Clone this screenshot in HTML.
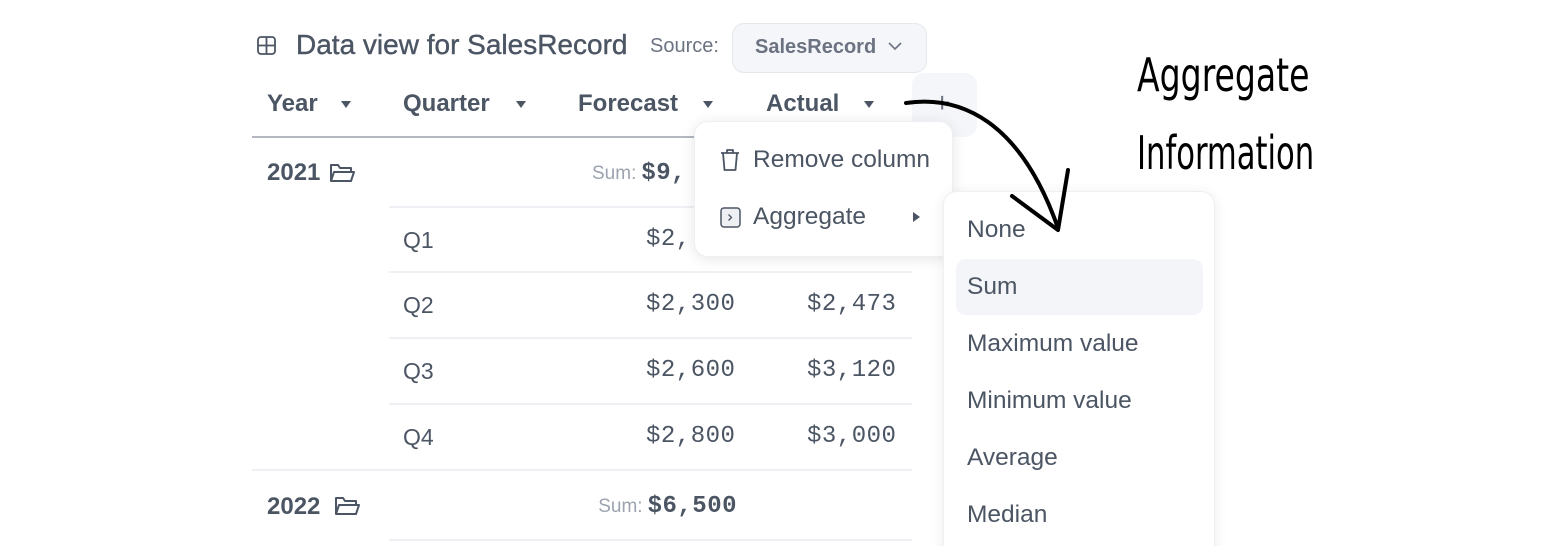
<!DOCTYPE html>
<html><head><meta charset="utf-8"><style>
*{margin:0;padding:0;box-sizing:border-box}
html{width:1552px;height:546px;overflow:hidden}
body{width:1552px;height:546px;background:#fff;position:relative;overflow:hidden;font-family:"Liberation Sans",sans-serif;color:#4b5563}
.a{position:absolute;white-space:nowrap}
.h{font-size:24px;font-weight:bold;line-height:30px}
.m{font-family:"Liberation Mono",monospace;font-size:24px;line-height:30px;letter-spacing:0.5px}
.r{text-align:right}
.q{font-size:23px;line-height:30px}
.line{position:absolute;height:2px;background:#eef0f4}
.tri{position:absolute;width:0;height:0;border-left:5px solid transparent;border-right:5px solid transparent;border-top:7px solid #4b5563}
.mi{font-size:24.5px;line-height:30px}
.b{font-weight:bold;font-size:24px}
.sum{font-size:19px;color:#9ca3af;font-family:"Liberation Sans",sans-serif;letter-spacing:0;margin-right:5px}
</style></head><body>

<svg class="a" style="left:257px;top:36px" width="19" height="19" viewBox="0 0 19 19"><rect x="1" y="1" width="17" height="17" rx="3" fill="none" stroke="#4b5563" stroke-width="1.8"/><path d="M9.5 1V18M1 9.5H18" stroke="#4b5563" stroke-width="1.8"/></svg>
<div class="a" style="left:296px;top:28px;font-size:28px;line-height:34px;-webkit-text-stroke:0.4px #4b5563">Data view for SalesRecord</div>
<div class="a" style="left:650px;top:34px;font-size:20px;line-height:24px;color:#6b7280">Source:</div>
<div class="a" style="left:732px;top:23px;width:195px;height:50px;border:1px solid #e5e7eb;border-radius:12px;background:#f5f6fa"></div>
<div class="a" style="left:755px;top:35px;font-size:20px;line-height:24px;color:#6b7280;font-weight:bold">SalesRecord</div>
<svg class="a" style="left:887px;top:40px" width="16" height="12" viewBox="0 0 16 12"><path d="M2 3L8 9L14 3" fill="none" stroke="#6b7280" stroke-width="1.6"/></svg>

<div class="a h" style="left:267px;top:89px">Year</div><div class="tri" style="left:341px;top:101px"></div>
<div class="a h" style="left:403px;top:89px">Quarter</div><div class="tri" style="left:516px;top:101px"></div>
<div class="a h" style="left:578px;top:89px">Forecast</div><div class="tri" style="left:703px;top:101px"></div>
<div class="a h" style="left:766px;top:89px">Actual</div><div class="tri" style="left:864px;top:101px"></div>
<div class="a" style="left:912px;top:73px;width:65px;height:64px;background:#f5f6fa;border-radius:12px"></div>
<div class="a" style="left:934px;top:86px;font-size:28px;line-height:34px;color:#6b7280">+</div>
<div class="a" style="left:252px;top:136px;width:660px;height:2px;background:#b4b8c0"></div>

<div class="a b" style="left:267px;top:158px;line-height:30px">2021</div>
<svg class="a" style="left:329px;top:162px" width="27" height="22" viewBox="0 0 27 22"><path d="M2 19V3h7l2 3h11v4M2 19l3-9h20l-3 9z" fill="none" stroke="#4b5563" stroke-width="2" stroke-linejoin="round"/></svg>
<div class="a m" style="left:592px;top:159px"><span class="sum">Sum:</span><b>$9,</b></div>
<div class="line" style="left:389px;top:206px;width:523px"></div>
<div class="a q" style="left:403px;top:225px">Q1</div>
<div class="a m" style="left:646px;top:225px">$2,</div>
<div class="line" style="left:389px;top:271px;width:523px"></div>
<div class="a q" style="left:403px;top:290px">Q2</div>
<div class="a m" style="left:646px;top:290px">$2,300</div><div class="a m" style="left:807px;top:290px">$2,473</div>
<div class="line" style="left:389px;top:337px;width:523px"></div>
<div class="a q" style="left:403px;top:356px">Q3</div>
<div class="a m" style="left:646px;top:356px">$2,600</div><div class="a m" style="left:807px;top:356px">$3,120</div>
<div class="line" style="left:389px;top:403px;width:523px"></div>
<div class="a q" style="left:403px;top:422px">Q4</div>
<div class="a m" style="left:646px;top:422px">$2,800</div><div class="a m" style="left:807px;top:422px">$3,000</div>
<div class="line" style="left:252px;top:469px;width:660px"></div>
<div class="a b" style="left:267px;top:492px;line-height:30px">2022</div>
<svg class="a" style="left:334px;top:495px" width="27" height="22" viewBox="0 0 27 22"><path d="M2 19V3h7l2 3h11v4M2 19l3-9h20l-3 9z" fill="none" stroke="#4b5563" stroke-width="2" stroke-linejoin="round"/></svg>
<div class="a m r" style="left:500px;width:237px;top:492px"><span class="sum">Sum:</span><b>$6,500</b></div>
<div class="line" style="left:389px;top:539px;width:523px"></div>

<div class="a" style="left:694px;top:121px;width:259px;height:136px;background:#fff;border-radius:14px;box-shadow:0 2px 14px rgba(0,0,0,0.10);border:1px solid #eef0f4"></div>
<svg class="a" style="left:719px;top:148px" width="22" height="24" viewBox="0 0 22 24"><path d="M2 5H20M8 5V2H14V5M4 5L5.5 22H16.5L18 5" fill="none" stroke="#4b5563" stroke-width="1.8" stroke-linejoin="round"/></svg>
<div class="a mi" style="left:753px;top:145px">Remove column</div>
<svg class="a" style="left:720px;top:207px" width="21" height="21" viewBox="0 0 21 21"><rect x="1" y="1" width="19" height="19" rx="3" fill="#eef0f4" stroke="#4b5563" stroke-width="1.5"/><path d="M8.5 7.5L11.5 10.5L8.5 13.5" fill="none" stroke="#4b5563" stroke-width="1.3"/></svg>
<div class="a mi" style="left:753px;top:202px">Aggregate</div>
<div class="a" style="left:913px;top:212px;width:0;height:0;border-top:5px solid transparent;border-bottom:5px solid transparent;border-left:7px solid #4b5563"></div>

<div class="a" style="left:943px;top:191px;width:272px;height:380px;background:#fff;border-radius:14px;box-shadow:0 2px 14px rgba(0,0,0,0.08);border:1px solid #eef0f4"></div>
<div class="a" style="left:956px;top:259px;width:247px;height:56px;background:#f4f5f8;border-radius:10px"></div>
<div class="a mi" style="left:967px;top:215px">None</div>
<div class="a mi" style="left:967px;top:272px">Sum</div>
<div class="a mi" style="left:967px;top:329px">Maximum value</div>
<div class="a mi" style="left:967px;top:386px">Minimum value</div>
<div class="a mi" style="left:967px;top:443px">Average</div>
<div class="a mi" style="left:967px;top:500px">Median</div>

<div class="a" style="left:1137px;top:50px;font-family:'DejaVu Sans Condensed','Liberation Sans Narrow',sans-serif;font-size:46px;line-height:50px;color:#000;font-weight:200;transform:scaleX(0.8);transform-origin:left">Aggregate</div>
<div class="a" style="left:1137px;top:128px;font-family:'DejaVu Sans Condensed','Liberation Sans Narrow',sans-serif;font-size:46px;line-height:50px;color:#000;font-weight:200;transform:scaleX(0.74);transform-origin:left">Information</div>
<svg class="a" style="left:0;top:0" width="1552" height="546"><path d="M906 103C960 95 1020 120 1058 228" fill="none" stroke="#000" stroke-width="4" stroke-linecap="round"/><path d="M1012 196L1058 230L1068 170" fill="none" stroke="#000" stroke-width="4" stroke-linecap="round" stroke-linejoin="round"/></svg>
</body></html>
